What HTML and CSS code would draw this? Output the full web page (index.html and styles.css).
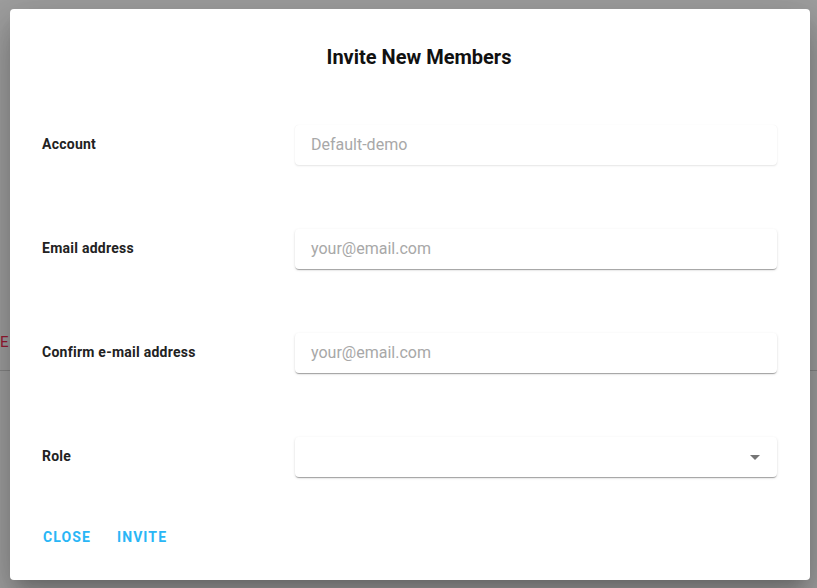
FILE: index.html
```html
<!DOCTYPE html>
<html>
<head>
<meta charset="utf-8">
<link rel="stylesheet" href="styles.css">
</head>
<body>
<div class="page-behind">
  <span class="behind-text">E</span>
  <div class="behind-line"></div>
</div>
<div class="dialog">
  <h2 class="dialog-title">Invite New Members</h2>
  <div class="form">
    <div class="row">
      <label class="label">Account</label>
      <div class="field field-disabled"><span class="placeholder">Default-demo</span></div>
    </div>
    <div class="row">
      <label class="label">Email address</label>
      <div class="field"><span class="placeholder">your@email.com</span></div>
    </div>
    <div class="row">
      <label class="label">Confirm e-mail address</label>
      <div class="field"><span class="placeholder">your@email.com</span></div>
    </div>
    <div class="row">
      <label class="label">Role</label>
      <div class="field field-select">
        <svg class="arrow" width="10" height="5" viewBox="0 0 10 5"><path d="M0 0h10L5 5z" fill="#757575"/></svg>
      </div>
    </div>
  </div>
  <div class="actions">
    <button class="btn">CLOSE</button>
    <button class="btn">INVITE</button>
  </div>
</div>
</body>
</html>
```
FILE: styles.css
```css
* { box-sizing: border-box; }
html, body { margin: 0; padding: 0; }
body {
  width: 817px;
  height: 588px;
  background: #9f9f9f;
  font-family: Roboto, "Liberation Sans", sans-serif;
  overflow: hidden;
  position: relative;
  padding: 9px 7px 8px 10px;
}
.page-behind { position: absolute; inset: 0; z-index: 0; }
.behind-text {
  position: absolute;
  left: 0;
  top: 333px;
  font-size: 15px;
  line-height: 18px;
  color: #9a1a33;
  font-family: Roboto, sans-serif;
}
.behind-line {
  position: absolute;
  left: 0; right: 0;
  top: 370px;
  height: 1px;
  background: #858585;
}
.dialog {
  position: relative;
  z-index: 1;
  width: 800px;
  height: 571px;
  background: #fff;
  border-radius: 4px;
  box-shadow: 0 11px 15px -7px rgba(0,0,0,.2), 0 24px 38px 3px rgba(0,0,0,.14), 0 9px 46px 8px rgba(0,0,0,.12);
  display: flex;
  flex-direction: column;
  padding: 0 33px 0 32px;
}
.dialog-title {
  margin: 0;
  padding-top: 36px;
  height: 116px;
  text-align: center;
  font-size: 20px;
  font-weight: 700;
  line-height: 24px;
  color: #111;
  padding-left: 19px;
}
.form { display: flex; flex-direction: column; gap: 64px; }
.row { display: flex; align-items: center; height: 40px; }
.label {
  width: 253px;
  font-size: 14px;
  font-weight: 700;
  letter-spacing: 0.25px;
  color: #222;
  margin-top: -2px;
}
.field {
  flex: 1;
  height: 40px;
  border-radius: 4px;
  background: #fff;
  box-shadow: 0 2px 1px -1px rgba(0,0,0,.2), 0 1px 1px 0 rgba(0,0,0,.14), 0 1px 3px 0 rgba(0,0,0,.12);
  display: flex;
  align-items: center;
  padding: 0 16px;
}
.field-disabled {
  box-shadow: 0 1px 2px 0 rgba(0,0,0,.1), 0 0 1px 0 rgba(0,0,0,.06);
}
.field-select { justify-content: flex-end; padding-right: 17px; }
.placeholder { font-size: 16px; color: #a8a8a8; margin-top: -1px; }
.actions {
  display: flex;
  gap: 10px;
  margin-top: 42px;
  margin-left: -7px;
}
.btn {
  border: 0;
  background: transparent;
  font-family: Roboto, sans-serif;
  font-size: 14px;
  font-weight: 700;
  letter-spacing: 1.1px;
  color: #29b6f6;
  height: 36px;
  padding: 0 8px;
}
```
